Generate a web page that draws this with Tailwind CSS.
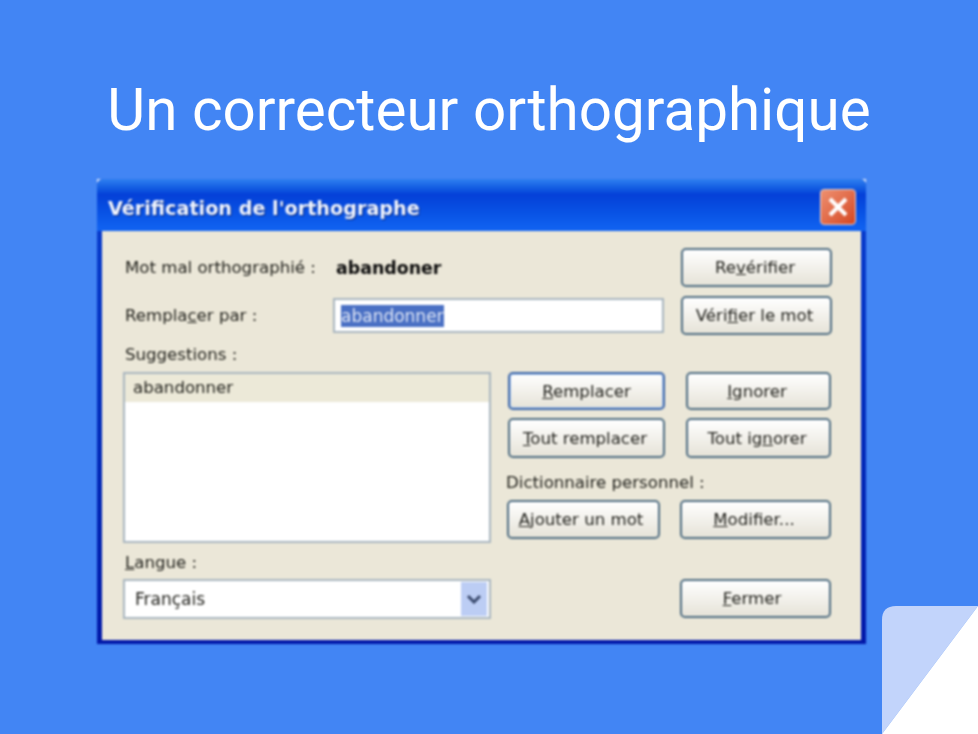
<!DOCTYPE html>
<html lang="fr">
<head>
    <meta charset="UTF-8">
    <title>Un correcteur orthographique</title>
    <script src="https://cdn.jsdelivr.net/npm/@tailwindcss/browser@4"></script>
</head>
<body class="bg-[#4285f4] font-['Roboto',sans-serif]">
    <div class="relative w-[978px] h-[734px] overflow-hidden pt-[70px]">
        <h1 class="text-center text-white text-[58.4px] leading-[80px]">Un correcteur orthographique</h1>

        <!-- dialog -->
        <div class="mt-[29px] ml-[97px] w-[769px] h-[465px] bg-[#e4ebfa] blur-[0.8px]">
        <div class="h-full flex flex-col bg-linear-to-b from-[#0a3fd0] to-[#0218a8] px-[5px] pb-[4px] font-['DejaVu_Sans',sans-serif] text-[16.6px] text-[#1f1f1a] rounded-t-[6px]">
            <div class="h-[52px] -mx-[5px] pl-[11px] pr-[10px] flex items-center justify-between rounded-t-[6px] bg-linear-to-b from-[#2f7ff0] from-0% via-[#0540d8] via-30% to-[#1264f2]">
                <span class="text-[#f0f4fe] font-bold text-[19.2px] mt-[9px] [text-shadow:1px_1px_1px_#0a2a80]">Vérification de l'orthographe</span>
                <div class="w-[36px] h-[36px] mt-[3px] flex items-center justify-center rounded-[4px] border border-[#e8d0cc] bg-linear-to-br from-[#ee9070] to-[#d4451e]">
                    <svg width="24" height="24" viewBox="0 0 24 24"><path d="M4 4 L20 20 M20 4 L4 20" stroke="#fff" stroke-width="4"/></svg>
                </div>
            </div>

            <div class="flex-1 bg-[#ebe7d8] pt-[17px] pl-[21px]">
                <!-- word rows -->
                <div class="flex h-[39px] items-center">
                    <span class="w-[211px] pl-[2px] pt-[2px]">Mot mal orthographié :</span>
                    <span class="ml-[2px] font-bold text-[#0c0c0c] text-[17.4px] pt-[1px]">abandoner</span>
                    <button class="ml-auto mr-[29px] w-[151px] h-[39px] pt-[2px] pr-[3px] rounded-[5px] border-2 border-[#4f6d82] bg-linear-to-b from-white to-[#e6e3d8]">Re<u>v</u>érifier</button>
                </div>
                <div class="flex h-[39px] items-center mt-[9px]">
                    <span class="w-[210px] pl-[2px] pt-[2px]">Rempla<u>c</u>er par :</span>
                    <div class="w-[331px] h-[35px] border-2 border-[#a9b6bf] bg-white pl-[6px] flex items-center">
                        <span class="bg-[#4a70c4] text-[#dfe6f6] text-[17px] leading-[22px]">abandonner</span>
                    </div>
                    <button class="ml-auto mr-[29px] w-[151px] h-[39px] pt-[2px] pr-[4px] rounded-[5px] border-2 border-[#4f6d82] bg-linear-to-b from-white to-[#e6e3d8]">Véri<u>f</u>ier le mot</button>
                </div>

                <!-- suggestions + actions -->
                <div class="flex mt-[4px]">
                    <div class="w-[368px]">
                        <div class="pl-[2px] pt-[2px] h-[30px] flex items-center">Suggestions :</div>
                        <div class="h-[171px] mt-[3px] border-2 border-[#a9b6bf] bg-white">
                            <div class="h-[28px] bg-[#ece9d8] pl-[8px] leading-[28px]">abandonner</div>
                        </div>
                        <div class="pl-[2px] pb-[3px] h-[36px] flex items-end"><span><u>L</u>angue :</span></div>
                        <div class="h-[40px] border-2 border-[#a9b6bf] bg-white flex items-center justify-between pl-[10px] pr-[2px]">
                            <span class="pt-[2px] text-[17px]">Français</span>
                            <div class="w-[26px] h-[34px] bg-[#bccdf4] flex items-center justify-center">
                                <svg width="16" height="10" viewBox="0 0 16 10"><path d="M2 2 L8 8 L14 2" fill="none" stroke="#3c4c70" stroke-width="3"/></svg>
                            </div>
                        </div>
                    </div>

                    <div class="ml-[17px] w-[323px] pt-[33px]">
                        <div class="grid grid-cols-[157px_145px] gap-x-[21px] gap-y-[8px] h-[86px]">
                            <button class="h-[38px] pt-[2px] rounded-[5px] border-2 border-[#3f68a8] shadow-[inset_0_0_0_1px_#a8c4ec] bg-linear-to-b from-white to-[#e6e3d8]"><u>R</u>emplacer</button>
                            <button class="h-[38px] pt-[2px] pr-[3px] rounded-[5px] border-2 border-[#4f6d82] bg-linear-to-b from-white to-[#e6e3d8]"><u>I</u>gnorer</button>
                            <button class="h-[40px] pt-[2px] pr-[3px] rounded-[5px] border-2 border-[#4f6d82] bg-linear-to-b from-white to-[#e6e3d8]"><u>T</u>out remplacer</button>
                            <button class="h-[40px] pt-[2px] pr-[3px] rounded-[5px] border-2 border-[#4f6d82] bg-linear-to-b from-white to-[#e6e3d8]">Tout ig<u>n</u>orer</button>
                        </div>
                        <div class="h-[42px] -ml-[2px] flex items-center pt-[9px]">Dictionnaire personnel :</div>
                        <div class="flex -ml-[1px]">
                            <button class="w-[153px] h-[39px] pt-[2px] pr-[5px] rounded-[5px] border-2 border-[#4f6d82] bg-linear-to-b from-white to-[#e6e3d8]"><u>A</u>jouter un mot</button>
                            <button class="ml-[20px] w-[151px] h-[39px] pt-[2px] pr-[3px] rounded-[5px] border-2 border-[#4f6d82] bg-linear-to-b from-white to-[#e6e3d8]"><u>M</u>odifier...</button>
                        </div>
                        <div class="flex justify-end mt-[40px]">
                            <button class="w-[151px] h-[39px] pt-[2px] pr-[7px] rounded-[5px] border-2 border-[#4f6d82] bg-linear-to-b from-white to-[#e6e3d8]"><u>F</u>ermer</button>
                        </div>
                    </div>
                </div>
            </div>
        </div>
        </div>

        <!-- folded corner -->
        <svg class="absolute right-0 bottom-0" width="96" height="128" viewBox="0 0 96 128">
            <path d="M0 128 V14 Q0 0 14 0 H96 Z" fill="#c2d4fb"/>
            <path d="M0 128 L96 0 V128 Z" fill="#fff"/>
        </svg>
    </div>
</body>
</html>
